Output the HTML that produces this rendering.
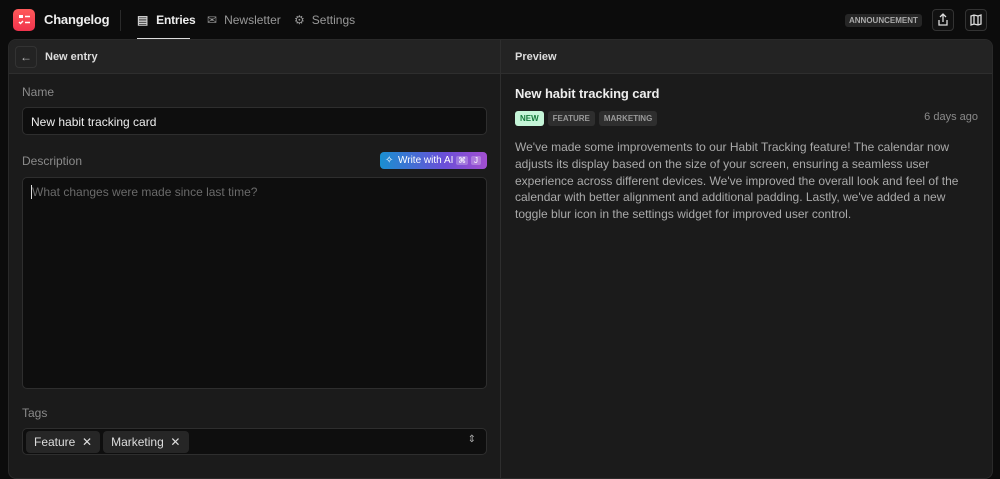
<!DOCTYPE html>
<html><head><style>
*{box-sizing:border-box;margin:0;padding:0}
body{width:1000px;height:466px;background:#0c0c0c;font-family:"Liberation Sans",sans-serif;color:#eee;position:relative;overflow:hidden;font-size:12px}
.abs{position:absolute}
.logo{left:13px;top:9px;width:22px;height:22px;border-radius:5px;background:linear-gradient(#ff5a5a,#f0334d)}
.nav{top:13px;font-size:12px;color:#999}
.panel{left:8px;top:39px;width:985px;height:440px;background:#1b1b1b;border:1px solid #2a2a2a;border-radius:8px;overflow:hidden}
.hdr{left:0;top:0;width:985px;height:34px;background:#232323;border-bottom:1px solid #2e2e2e}
.inp{background:#0e0e0e;border:1px solid #2e2e2e;border-radius:5px}
.lbl{color:#8a8a8a;font-size:12px}
.tag{font-size:8px;font-weight:bold;padding:3px 5px;border-radius:3px;background:#2e2e2e;color:#999;display:inline-block;margin-right:4px}
.chip{display:inline-block;background:#262626;border-radius:4px;padding:4px 8px;font-size:12px;color:#ddd;margin-right:3px}
.btn{width:22px;height:22px;border:1px solid #333;border-radius:4px;top:9px;background:#111}
</style></head><body>
<div class="abs logo"><svg width="22" height="22" viewBox="0 0 22 22" fill="none" stroke="#fff" stroke-width="1.4"><rect x="6" y="6" width="4" height="3" fill="#fff" stroke="none"/><path d="M12 7.5h5M6 13l1.5 1.5L10 12M12 13.5h5"/></svg></div>
<div class="abs" style="left:44px;top:12px;font-size:13px;font-weight:bold;color:#eee;letter-spacing:-0.2px">Changelog</div>
<div class="abs" style="left:120px;top:10px;width:1px;height:21px;background:#2a2a2a"></div>
<div class="abs nav" style="left:137px;color:#eee;font-weight:bold;letter-spacing:-0.2px"><span style="color:#ccc;margin-right:8px">▤</span>Entries</div>
<div class="abs" style="left:137px;top:38px;width:53px;height:2px;background:#ddd"></div>
<div class="abs nav" style="left:207px"><span style="margin-right:7px">✉</span>Newsletter</div>
<div class="abs nav" style="left:294px"><span style="margin-right:7px">⚙</span>Settings</div>
<div class="abs" style="left:845px;top:14px;background:#262626;border-radius:3px;padding:2px 4px;font-size:8px;font-weight:bold;color:#aaa">ANNOUNCEMENT</div>
<div class="abs btn" style="left:932px"><svg width="20" height="20" viewBox="0 0 20 20" fill="none" stroke="#ddd" stroke-width="1.3"><path d="M10 4v8M7 7l3-3 3 3M6 10v5h8v-5"/></svg></div>
<div class="abs btn" style="left:965px"><svg width="20" height="20" viewBox="0 0 20 20" fill="none" stroke="#ddd" stroke-width="1.3"><path d="M5 6l3-1 4 1 3-1v9l-3 1-4-1-3 1zM8 5v9M12 6v9"/></svg></div>
<div class="abs panel">
<div class="abs hdr"></div>
<div class="abs" style="left:491px;top:0;width:1px;height:440px;background:#2e2e2e"></div>
<div class="abs" style="left:6px;top:6px;width:22px;height:22px;border:1px solid #333;border-radius:4px;color:#bbb;text-align:center;line-height:20px;font-size:12px">←</div>
<div class="abs" style="left:36px;top:11px;font-size:11px;font-weight:bold;color:#ddd">New entry</div>
<div class="abs" style="left:506px;top:11px;font-size:11px;font-weight:bold;color:#ddd">Preview</div>
<div class="abs lbl" style="left:13px;top:45px">Name</div>
<div class="abs inp" style="left:13px;top:67px;width:465px;height:28px;padding:7px 8px;font-size:12px;color:#eee">New habit tracking card</div>
<div class="abs lbl" style="left:13px;top:114px">Description</div>
<div class="abs" style="left:371px;top:112px;width:107px;height:17px;border-radius:4px;background:linear-gradient(90deg,#1a8fd0,#6b4fd8 60%,#a24fd0);font-size:10px;line-height:17px;color:#fff;padding-left:18px">Write with AI <span style="background:rgba(255,255,255,.25);border-radius:2px;padding:0 2px;font-size:8px">⌘</span> <span style="background:rgba(255,255,255,.25);border-radius:2px;padding:0 3px;font-size:8px">J</span><span class="abs" style="left:5px;top:0">✧</span></div>
<div class="abs inp" style="left:13px;top:137px;width:465px;height:212px;padding:7px 8px;color:#6a6a6a;font-size:12px"><span style="border-left:1px solid #ddd"></span>What changes were made since last time?</div>
<div class="abs lbl" style="left:13px;top:366px">Tags</div>
<div class="abs inp" style="left:13px;top:388px;width:465px;height:27px;padding:2px 3px"><span class="chip">Feature &nbsp;✕</span><span class="chip">Marketing &nbsp;✕</span><span class="abs" style="right:10px;top:5px;color:#aaa;font-size:10px">⇕</span></div>
<div class="abs" style="left:506px;top:46px;font-size:13px;font-weight:bold;color:#eee;letter-spacing:-0.1px">New habit tracking card</div>
<div class="abs" style="left:506px;top:70px"><span class="tag" style="background:#c5f5d8;color:#167a3c">NEW</span><span class="tag">FEATURE</span><span class="tag">MARKETING</span></div>
<div class="abs" style="right:14px;top:71px;color:#8a8a8a;font-size:11px">6 days ago</div>
<div class="abs" style="left:506px;top:99px;width:460px;font-size:12px;line-height:16.8px;color:#aaa">We've made some improvements to our Habit Tracking feature! The calendar now adjusts its display based on the size of your screen, ensuring a seamless user experience across different devices. We've improved the overall look and feel of the calendar with better alignment and additional padding. Lastly, we've added a new toggle blur icon in the settings widget for improved user control.</div>
</div>
</body></html>
